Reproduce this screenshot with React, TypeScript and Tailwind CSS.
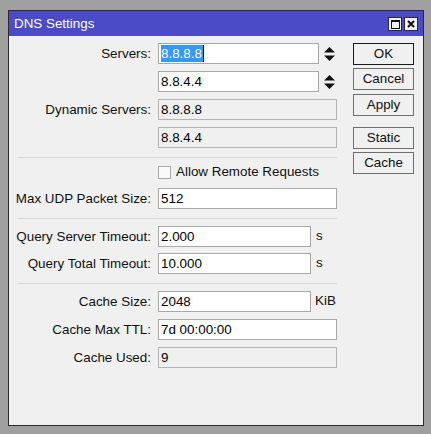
import React from 'react';

const font = { fontFamily: '"Liberation Sans", Arial, sans-serif' };

function Label({ children }: { children: React.ReactNode }) {
  return <div className="w-[142px] shrink-0 text-right leading-[21px] text-[#111] whitespace-nowrap">{children}</div>;
}

function Field({ value, width, disabled, selected }: { value: string; width: string; disabled?: boolean; selected?: boolean }) {
  return (
    <div
      className={`${width} h-[21px] border leading-[19px] pl-[2px] overflow-hidden whitespace-nowrap ${
        disabled ? 'bg-[#f0f0f0] border-[#b4b4b4]' : 'bg-white border-[#a8a8a8]'
      }`}
    >
      {selected ? (
        <span className="inline-flex items-center h-[17px] mt-[1px] align-top">
          <span className="bg-[#3399ff] text-white leading-[17px] pr-[1px]">{value}</span>
          <span className="w-[1px] h-[17px] bg-black" />
        </span>
      ) : (
        value
      )}
    </div>
  );
}

function Spinner() {
  return (
    <svg width="11" height="14" viewBox="0 0 11 14" className="ml-[5px]">
      <path d="M5.5 0 L11 5.5 L0 5.5 Z" fill="#111" />
      <path d="M0 8.5 L11 8.5 L5.5 14 Z" fill="#111" />
    </svg>
  );
}

function Row({ label, children, className = '' }: { label?: string; children: React.ReactNode; className?: string }) {
  return (
    <div className={`flex items-center h-[21px] ${className}`}>
      <Label>{label}</Label>
      <div className="flex items-center ml-[7px]">{children}</div>
    </div>
  );
}

function Separator({ className = '' }: { className?: string }) {
  return <div className={`ml-[9px] w-[319px] h-[1px] bg-[#d8d8d8] ${className}`} />;
}

function Btn({ children, primary, className = '' }: { children: React.ReactNode; primary?: boolean; className?: string }) {
  return (
    <div
      className={`w-[61px] h-[22px] flex items-center justify-center border bg-[#f0f0f0] text-[#111] ${
        primary ? 'border-[#1a1a1a]' : 'border-[#6e6e6e]'
      } ${className}`}
    >
      {children}
    </div>
  );
}

export default function App() {
  return (
    <div className="w-[431px] h-[434px] bg-[#a0a0a0] pt-[10px] pl-[8px] text-[13.4px]" style={font}>
      <div className="w-[416px] h-[416px] border border-[#2a2a2a] bg-[#f0f0f0] flex flex-col">
        {/* Title bar */}
        <div className="h-[25px] bg-[#4b4bc8] flex items-center justify-between pl-[5px] pr-[5px]">
          <span className="text-white leading-none mt-[1px]">DNS Settings</span>
          <div className="flex gap-[2px] mt-[1px]">
            <div className="w-[14px] h-[14px] bg-[#f0f0f0] border border-[#2a2a2a] flex items-center justify-center">
              <div className="w-[9px] h-[9px] border border-[#111] border-t-2" />
            </div>
            <div className="w-[14px] h-[14px] bg-[#f0f0f0] border border-[#2a2a2a] flex items-center justify-center">
              <svg width="8" height="8" viewBox="0 0 8 8">
                <path d="M1 1 L7 7 M7 1 L1 7" stroke="#111" strokeWidth="2" />
              </svg>
            </div>
          </div>
        </div>

        {/* Body */}
        <div className="flex pt-[7px]">
          <div className="flex flex-col w-[336px]">
            <Row label="Servers:">
              <Field value="8.8.8.8" width="w-[161px]" selected />
              <Spinner />
            </Row>
            <Row className="mt-[7px]">
              <Field value="8.8.4.4" width="w-[161px]" />
              <Spinner />
            </Row>
            <Row label="Dynamic Servers:" className="mt-[7px]">
              <Field value="8.8.8.8" width="w-[179px]" disabled />
            </Row>
            <Row className="mt-[7px]">
              <Field value="8.8.4.4" width="w-[179px]" disabled />
            </Row>

            <Separator className="mt-[9px]" />

            <div className="flex items-center h-[13px] mt-[8px] ml-[149px]">
              <div className="w-[13px] h-[13px] border border-[#a8a8a8] bg-[#fafafa]" />
              <span className="ml-[5px] text-[#111]">Allow Remote Requests</span>
            </div>

            <Row label="Max UDP Packet Size:" className="mt-[9px]">
              <Field value="512" width="w-[179px]" />
            </Row>

            <Separator className="mt-[9px]" />

            <Row label="Query Server Timeout:" className="mt-[7px]">
              <Field value="2.000" width="w-[153px]" />
              <span className="ml-[5px] text-[#111]">s</span>
            </Row>
            <Row label="Query Total Timeout:" className="mt-[6px]">
              <Field value="10.000" width="w-[153px]" />
              <span className="ml-[5px] text-[#111]">s</span>
            </Row>

            <Separator className="mt-[9px]" />

            <Row label="Cache Size:" className="mt-[7px]">
              <Field value="2048" width="w-[153px]" />
              <span className="ml-[4px] text-[#111]">KiB</span>
            </Row>
            <Row label="Cache Max TTL:" className="mt-[7px]">
              <Field value="7d 00:00:00" width="w-[179px]" />
            </Row>
            <Row label="Cache Used:" className="mt-[7px]">
              <Field value="9" width="w-[179px]" disabled />
            </Row>
          </div>

          <div className="flex flex-col ml-[8px]">
            <Btn primary>OK</Btn>
            <Btn className="mt-[3px]">Cancel</Btn>
            <Btn className="mt-[4px]">Apply</Btn>
            <Btn className="mt-[11px]">Static</Btn>
            <Btn className="mt-[3px]">Cache</Btn>
          </div>
        </div>
      </div>
    </div>
  );
}
